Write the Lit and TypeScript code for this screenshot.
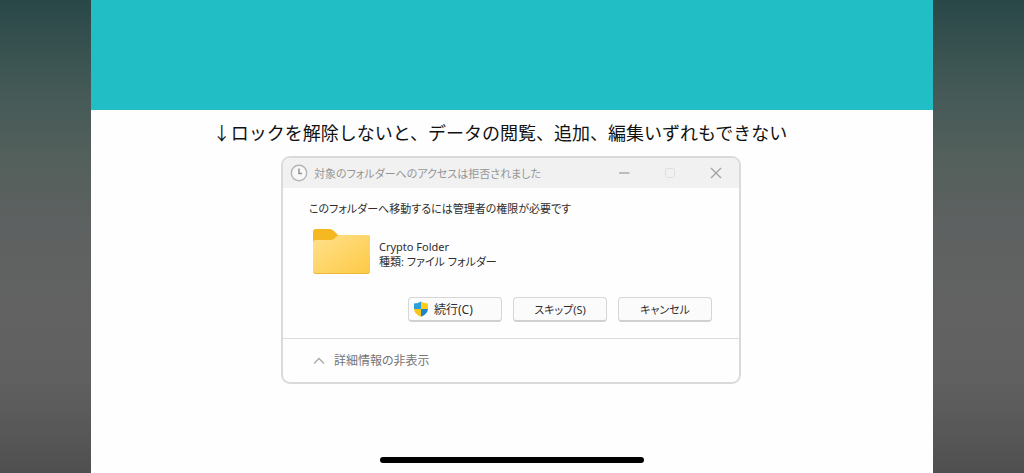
import { LitElement, html, css } from "lit";
import { customElement, state } from "lit/decorators.js";

@customElement("access-dialog")
export class AccessDialog extends LitElement {
  static styles = css`
    :host {
      display: block;
      box-sizing: border-box;
      width: 460px;
      max-width: 100%;
      border: 2px solid #dadada;
      border-radius: 9px;
      overflow: hidden;
      background: #fefefe;
      color: #2e2e2e;
      font-size: 11px;
      line-height: 15px;
    }
    button {
      font: inherit;
      color: inherit;
      background: none;
      border: 0;
      padding: 0;
      margin: 0;
    }
    svg {
      display: block;
      flex: none;
    }
    .titlebar {
      display: flex;
      align-items: center;
      height: 30px;
      padding: 0 12px 0 7px;
      background: #f1f1f1;
      color: #959595;
    }
    .title {
      flex: 1;
      margin: 0 0 0 6px;
      font-size: 11px;
      font-weight: 400;
      white-space: nowrap;
    }
    .jp {
      font-feature-settings: "palt";
    }
    .controls {
      display: flex;
      gap: 24px;
    }
    .control {
      width: 22px;
      height: 22px;
      display: grid;
      place-items: center;
    }
    .body {
      padding: 13px 27px 16px 26px;
    }
    .message {
      margin: 0;
      white-space: nowrap;
    }
    .item {
      display: flex;
      align-items: center;
      gap: 8px;
      margin: 13px 0 22px 3px;
    }
    .name {
      margin: 0;
      padding-top: 3px;
    }
    .actions {
      display: flex;
      justify-content: flex-end;
      gap: 11px;
    }
    .action {
      display: flex;
      align-items: center;
      justify-content: center;
      gap: 5px;
      box-sizing: border-box;
      width: 94px;
      height: 25px;
      border: 1px solid #d6d6d6;
      border-bottom: 2px solid #d0d0d0;
      border-radius: 4px;
      background: #fcfbfc;
    }
    .primary {
      justify-content: flex-start;
      padding-left: 4px;
      font-size: 12px;
    }
    .footer {
      border-top: 1px solid #dcdcdc;
      padding: 14px 29px;
    }
    .toggle {
      display: flex;
      align-items: center;
      gap: 8px;
      font-size: 12px;
      color: #757575;
    }
  `;

  @state() private expanded = true;

  render() {
    return html`
      <header class="titlebar">
        <svg width="18" height="18" viewBox="0 0 18 18" fill="none">
          <circle cx="9" cy="9" r="7.7" fill="#f8f8f8" stroke="#b4b4b4" stroke-width="1.4" />
          <path d="M9 4.5V9.5H12" stroke="#929292" stroke-width="1.5" />
        </svg>
        <h1 class="title jp">対象のフォルダーへのアクセスは拒否されました</h1>
        <div class="controls">
          <button class="control" aria-label="最小化">
            <svg width="12" height="12" viewBox="0 0 12 12"><path d="M1 6H11.5" stroke="#aaa" stroke-width="1.5" /></svg>
          </button>
          <button class="control" aria-label="最大化" disabled>
            <svg width="12" height="12" viewBox="0 0 12 12"><rect x="1.5" y="1.5" width="9" height="9" rx="1" fill="none" stroke="#dfdfdf" /></svg>
          </button>
          <button class="control" aria-label="閉じる">
            <svg width="12" height="12" viewBox="0 0 12 12"><path d="M1 1L11 11M11 1L1 11" stroke="#a4a4a4" stroke-width="1.4" /></svg>
          </button>
        </div>
      </header>
      <section class="body">
        <p class="message jp">このフォルダーへ移動するには管理者の権限が必要です</p>
        <div class="item">
          <svg width="59" height="46" viewBox="0 0 59 46">
            <defs>
              <linearGradient id="front" x1="0" y1="0" x2="1" y2="1">
                <stop offset="0" stop-color="#ffe08c" />
                <stop offset="1" stop-color="#fdca45" />
              </linearGradient>
            </defs>
            <path d="M1 3Q1 0 4 0H18Q20 0 22 2L26 6H55Q58 6 58 9V20H1Z" fill="#f5b820" />
            <path d="M1 14Q1 11 4 11H19Q21 11 23 9L25 7Q26 6 28 6H55Q58 6 58 9V42Q58 45 55 45H4Q1 45 1 42Z" fill="url(#front)" />
            <path d="M1 41Q1 45 4 45H55Q58 45 58 41Q58 44 55 44H4Q1 44 1 41Z" fill="#edb73a" />
          </svg>
          <p class="name jp">Crypto Folder<br />種類: ファイル フォルダー</p>
        </div>
        <div class="actions">
          <button class="action primary jp">
            <svg width="16" height="16" viewBox="0 0 16 16">
              <defs>
                <clipPath id="shield"><path d="M8 0.5Q11 2.5 15 2.5V7.5Q15 13 8 15.8Q1 13 1 7.5V2.5Q5 2.5 8 0.5Z" /></clipPath>
              </defs>
              <g clip-path="url(#shield)">
                <path d="M0 0H8V8H0Z" fill="#2d9fda" />
                <path d="M8 0H16V8H8Z" fill="#fbce16" />
                <path d="M0 8H8V16H0Z" fill="#f8c51a" />
                <path d="M8 8H16V16H8Z" fill="#1f83c4" />
              </g>
            </svg>
            続行(C)
          </button>
          <button class="action jp">スキップ(S)</button>
          <button class="action jp">キャンセル</button>
        </div>
      </section>
      <footer class="footer">
        <button
          class="toggle jp"
          aria-expanded=${this.expanded ? "true" : "false"}
          @click=${() => (this.expanded = !this.expanded)}
        >
          <svg width="14" height="12" viewBox="0 0 14 12"><path d="M2 8.5L7 3.5L12 8.5" fill="none" stroke="#aaa" stroke-width="1.3" /></svg>
          詳細情報の非表示
        </button>
      </footer>
    `;
  }
}

@customElement("app-root")
export class AppRoot extends LitElement {
  static styles = css`
    :host {
      display: flex;
      box-sizing: border-box;
      min-height: 100vh;
      padding: 0 91px;
      position: relative;
      font-family: "Noto Sans", "Noto Sans CJK JP", sans-serif;
      background: linear-gradient(
        #294747 0%,
        #344f4e 8%,
        #455a57 20%,
        #54605c 34%,
        #5e6161 48%,
        #626262 65%,
        #606060 80%,
        #575757 92%,
        #4f4f4f 100%
      );
    }
    .page {
      flex: 1;
      min-width: 0;
      display: flex;
      flex-direction: column;
      align-items: center;
      background: #fefefe;
    }
    .banner {
      align-self: stretch;
      height: 110px;
      background: #21bec5;
    }
    .caption {
      margin: 9px 0 11px;
      padding-right: 24px;
      font-family: "Noto Sans CJK JP", sans-serif;
      font-size: 18px;
      line-height: 26px;
      color: #111;
    }
    access-dialog {
      margin-right: 2px;
    }
    .home {
      position: absolute;
      left: 50%;
      bottom: 10px;
      width: 264px;
      height: 6px;
      margin-left: -132px;
      border-radius: 3px;
      background: #000;
    }
  `;

  render() {
    return html`
      <main class="page">
        <div class="banner"></div>
        <p class="caption">↓ロックを解除しないと、データの閲覧、追加、編集いずれもできない</p>
        <access-dialog></access-dialog>
      </main>
      <div class="home"></div>
    `;
  }
}
